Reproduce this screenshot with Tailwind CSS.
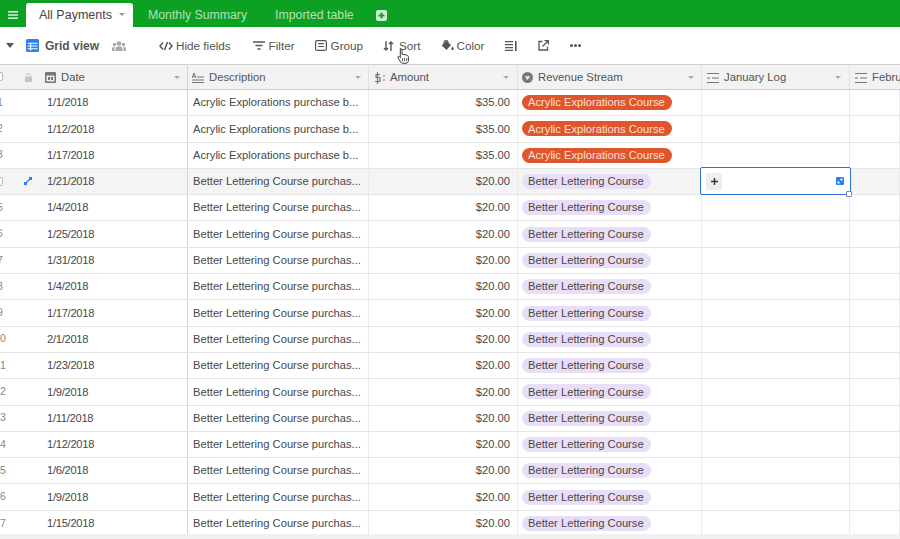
<!DOCTYPE html>
<html lang="en">
<head>
<meta charset="UTF-8">
<title>All Payments</title>
<script src="https://cdn.jsdelivr.net/npm/@tailwindcss/browser@4"></script>
</head>
<body class="bg-white overflow-hidden h-[539px] w-[900px] relative font-['Liberation_Sans',sans-serif] text-[#404040]">

<!-- top bar -->
<div class="h-[27px] bg-[#0ca122] flex items-end text-[12.3px]">
  <div class="w-[26px] h-[27px] flex items-center justify-center pt-[3px]">
    <svg width="10" height="8" viewBox="0 0 10 8" fill="#fff" class="opacity-80"><rect width="10" height="1.6"/><rect y="3.2" width="10" height="1.6"/><rect y="6.4" width="10" height="1.6"/></svg>
  </div>
  <div class="w-[107px] h-[24px] bg-white rounded-t-[3px] flex items-center pl-[13px] text-[#444] text-[12.5px] relative">All Payments
    <span class="absolute left-[93px] top-[10px] border-x-[3px] border-x-transparent border-t-[3px] border-t-[#999]"></span>
  </div>
  <div class="h-[27px] flex items-center pt-[3px] pl-[15px] text-white/70">Monthly Summary</div>
  <div class="h-[27px] flex items-center pt-[3px] pl-[28px] text-white/70">Imported table</div>
  <div class="h-[27px] flex items-center pt-[3px] pl-[22px]">
    <svg width="11" height="11" viewBox="0 0 11 11"><rect width="11" height="11" rx="2" fill="#d3efd7"/><path d="M5.5 2.5v6M2.5 5.5h6" stroke="#0ca122" stroke-width="1.8"/></svg>
  </div>
</div>

<!-- toolbar -->
<div class="h-[37px] flex items-center text-[11.7px] text-[#555] relative">
  <span class="ml-[6px] border-x-[4px] border-x-transparent border-t-[5px] border-t-[#555]"></span>
  <svg class="ml-[12px]" width="13" height="13" viewBox="0 0 13 13"><rect width="13" height="13" rx="1.5" fill="#2d7ff0"/><path d="M1.5 4.2h10M1.5 7h10M1.5 9.8h10M4.6 4v7.5" stroke="#fff" stroke-width="1.1" fill="none"/></svg>
  <span class="ml-[6px] font-bold text-[12px] text-[#555]">Grid view</span>
  <svg class="ml-[13px]" width="14" height="10" viewBox="0 0 14 10" fill="#a8a8a8"><circle cx="7" cy="2.5" r="2.3"/><circle cx="2.5" cy="3.5" r="1.7"/><circle cx="11.5" cy="3.5" r="1.7"/><path d="M3.5 10V7.5C3.5 6 5 5.3 7 5.3S10.500 6 10.500 7.500V10zM0 10V7.500C0 6.300 1 5.800 2.500 5.800V10zM14 10V7.500C14 6.300 13 5.800 11.500 5.800V10z"/></svg>
  <svg class="ml-[33px]" width="14" height="10" viewBox="0 0 14 10" fill="none" stroke="#555" stroke-width="1.500"><path d="M4 1.500 1 5l3 3.500M10 1.500 13 5l-3 3.500M8.500 1 5.500 9"/></svg>
  <span class="ml-[3px]">Hide fields</span>
  <svg class="ml-[22px]" width="12" height="9" viewBox="0 0 12 9" stroke="#555" stroke-width="1.500"><path d="M0 1h12M2.500 4.500h7M4.500 8h3"/></svg>
  <span class="ml-[4px]">Filter</span>
  <svg class="ml-[20px]" width="12" height="11" viewBox="0 0 12 11" fill="none" stroke="#555" stroke-width="1.200"><rect x=".6" y=".6" width="10.800" height="9.800" rx="1.500"/><path d="M3 3.700h6M3 6.500h6"/></svg>
  <span class="ml-[4px]">Group</span>
  <svg class="ml-[20px]" width="11" height="10" viewBox="0 0 11 10" fill="none" stroke="#555" stroke-width="1.400"><path d="M3 0v9M1 7l2 2 2-2M8 10V1M6 3l2-2 2 2"/></svg>
  <span class="ml-[5px]">Sort</span>
  <svg class="ml-[20px]" width="13" height="11" viewBox="0 0 13 11" fill="#555"><path d="M5 .500 10 5 5.500 10 .800 5.500z"/><path d="M3 3.500V2a2 2 0 0 1 4 0v1.500" fill="none" stroke="#555"/><path d="M11.500 6.500c.8 1.200 1.200 1.800 1.200 2.400a1.200 1.200 0 0 1-2.400 0c0-.6.400-1.200 1.200-2.400z"/></svg>
  <span class="ml-[3px]">Color</span>
  <svg class="ml-[21px]" width="12" height="10" viewBox="0 0 12 10" fill="none" stroke="#555" stroke-width="1.200"><path d="M0 .600h8M0 3.600h8M0 6.600h8M0 9.400h8"/><path d="M10.800 0v10" stroke-width="1.600"/></svg>
  <svg class="ml-[21px]" width="11" height="11" viewBox="0 0 11 11" fill="none" stroke="#555" stroke-width="1.300"><path d="M4.500 1.500H1v8.500h8.500V6.500"/><path d="M4.500 6.500 10 1M6.500.700h3.800v3.800"/></svg>
  <span class="ml-[21px] flex gap-[1.500px]"><i class="w-[2.500px] h-[2.500px] rounded-full bg-[#555]"></i><i class="w-[2.500px] h-[2.500px] rounded-full bg-[#555]"></i><i class="w-[2.500px] h-[2.500px] rounded-full bg-[#555]"></i></span>
</div>

<!-- header row -->
<div class="h-[26px] pt-[1px] bg-[#f2f2f2] border-y border-[#d0d0d0] grid grid-cols-[188px_181px_149px_184px_148px_50px] text-[11.3px] text-[#555]">
  <div class="border-r border-[#d4d4d4] flex items-center relative">
    <span class="absolute -left-[6px] top-[6px] w-[9px] h-[9px] border border-[#bbb] rounded-[2px] bg-white"></span>
    <svg class="absolute left-[25px] top-[7px]" width="7" height="9" viewBox="0 0 7 9" fill="#c4c4c4"><rect y="3.500" width="7" height="5.500" rx="1"/><path d="M1.500 4V2.500a2 2 0 0 1 4 0V4" fill="none" stroke="#c4c4c4"/></svg>
    <svg class="absolute left-[45px] top-[6px]" width="11" height="11" viewBox="0 0 11 11"><rect width="11" height="11" rx="1" fill="#777"/><rect x="1.500" y="3.500" width="8" height="6" fill="#eee"/><rect x="3" y="5" width="2" height="3" fill="#777"/><rect x="6" y="5" width="2" height="3" fill="#777"/></svg>
    <span class="ml-[61px]">Date</span>
    <span class="absolute left-[174px] top-[10px] border-x-[3px] border-x-transparent border-t-[3px] border-t-[#aaa]"></span>
  </div>
  <div class="border-r border-[#e2e2e2] flex items-center relative">
    <svg class="ml-[4px]" width="12" height="10" viewBox="0 0 12 10" fill="none" stroke="#777" stroke-width="1"><path d="M0 5 2 0l2 5M1 3.500h2M5 4h7M0 7h12M0 9.500h12"/></svg>
    <span class="ml-[5px]">Description</span>
    <span class="absolute left-[167px] top-[10px] border-x-[3px] border-x-transparent border-t-[3px] border-t-[#aaa]"></span>
  </div>
  <div class="border-r border-[#e2e2e2] flex items-center relative">
    <svg class="ml-[5px]" width="12" height="12" viewBox="0 0 12 12" fill="none" stroke="#777" stroke-width="1.200"><path d="M6 2.500H2v3h4v4H1M3.500 0v12"/><path d="M9 4h2M9 8h2"/></svg>
    <span class="ml-[4px]">Amount</span>
    <span class="absolute left-[134px] top-[10px] border-x-[3px] border-x-transparent border-t-[3px] border-t-[#aaa]"></span>
  </div>
  <div class="border-r border-[#e2e2e2] flex items-center relative">
    <svg class="ml-[4px]" width="11" height="11" viewBox="0 0 11 11"><circle cx="5.500" cy="5.500" r="5.500" fill="#777"/><path d="M2.800 4.200h5.400L5.500 8z" fill="#eee"/></svg>
    <span class="ml-[5px]">Revenue Stream</span>
    <span class="absolute left-[170px] top-[10px] border-x-[3px] border-x-transparent border-t-[3px] border-t-[#aaa]"></span>
  </div>
  <div class="border-r border-[#e2e2e2] flex items-center relative">
    <svg class="ml-[5px]" width="12" height="10" viewBox="0 0 12 10" stroke="#777"><path d="M0 .500h12M0 5h3M5 5h7M0 9.500h12"/></svg>
    <span class="ml-[5px]">January Log</span>
    <span class="absolute left-[133px] top-[10px] border-x-[3px] border-x-transparent border-t-[3px] border-t-[#aaa]"></span>
  </div>
  <div class="flex items-center whitespace-nowrap">
    <svg class="ml-[5px] shrink-0" width="12" height="10" viewBox="0 0 12 10" stroke="#777"><path d="M0 .500h12M0 5h3M5 5h7M0 9.500h12"/></svg>
    <span class="ml-[5px]">Febru</span>
  </div>
</div>

<!-- rows -->
<div class="text-[11.2px] text-[#484848] [&>div]:h-[26.3px] [&>div]:border-b [&>div]:border-[#e4e4e4] [&>div]:grid [&>div]:grid-cols-[188px_181px_149px_184px_148px_50px] [&>div]:items-center [&_b]:font-normal [&_b]:h-full [&_b]:flex [&_b]:items-center [&_b]:border-r [&_b]:border-[#ececec] [&_b:first-child]:border-[#d4d4d4] [&_b:first-child]:pl-[47px] [&_b:first-child]:tracking-[-0.3px] [&_b:nth-child(2)]:pl-[5px] [&_b:nth-child(3)]:justify-end [&_b:nth-child(3)]:pr-[7px] [&_b:nth-child(4)]:pl-[4px] [&_em]:not-italic [&_em]:absolute [&_em]:left-0 [&_em]:text-[#888] [&_em]:text-[10.5px] [&_span]:rounded-full [&_span]:pl-[6px] [&_span]:pr-[7px] [&_span]:h-[15px] [&_span]:flex [&_span]:items-center">
  <div><b>1/1/2018<em class="-ml-[3px]">1</em></b><b>Acrylic Explorations purchase b...</b><b>$35.00</b><b><span class="bg-[#e0552c] text-[#fbe0d6]">Acrylic Explorations Course</span></b><b></b><b></b></div>
  <div><b>1/12/2018<em class="-ml-[3px]">2</em></b><b>Acrylic Explorations purchase b...</b><b>$35.00</b><b><span class="bg-[#e0552c] text-[#fbe0d6]">Acrylic Explorations Course</span></b><b></b><b></b></div>
  <div><b>1/17/2018<em class="-ml-[3px]">3</em></b><b>Acrylic Explorations purchase b...</b><b>$35.00</b><b><span class="bg-[#e0552c] text-[#fbe0d6]">Acrylic Explorations Course</span></b><b></b><b></b></div>
  <div class="bg-[#f4f4f4]"><b>1/21/2018</b><b>Better Lettering Course purchas...</b><b>$20.00</b><b><span class="bg-[#e8def7]">Better Lettering Course</span></b><b></b><b></b></div>
  <div><b>1/4/2018<em class="-ml-[3px]">5</em></b><b>Better Lettering Course purchas...</b><b>$20.00</b><b><span class="bg-[#e8def7]">Better Lettering Course</span></b><b></b><b></b></div>
  <div><b>1/25/2018<em class="-ml-[3px]">6</em></b><b>Better Lettering Course purchas...</b><b>$20.00</b><b><span class="bg-[#e8def7]">Better Lettering Course</span></b><b></b><b></b></div>
  <div><b>1/31/2018<em class="-ml-[3px]">7</em></b><b>Better Lettering Course purchas...</b><b>$20.00</b><b><span class="bg-[#e8def7]">Better Lettering Course</span></b><b></b><b></b></div>
  <div><b>1/4/2018<em class="-ml-[3px]">8</em></b><b>Better Lettering Course purchas...</b><b>$20.00</b><b><span class="bg-[#e8def7]">Better Lettering Course</span></b><b></b><b></b></div>
  <div><b>1/17/2018<em class="-ml-[3px]">9</em></b><b>Better Lettering Course purchas...</b><b>$20.00</b><b><span class="bg-[#e8def7]">Better Lettering Course</span></b><b></b><b></b></div>
  <div><b>2/1/2018<em>0</em></b><b>Better Lettering Course purchas...</b><b>$20.00</b><b><span class="bg-[#e8def7]">Better Lettering Course</span></b><b></b><b></b></div>
  <div><b>1/23/2018<em>1</em></b><b>Better Lettering Course purchas...</b><b>$20.00</b><b><span class="bg-[#e8def7]">Better Lettering Course</span></b><b></b><b></b></div>
  <div><b>1/9/2018<em>2</em></b><b>Better Lettering Course purchas...</b><b>$20.00</b><b><span class="bg-[#e8def7]">Better Lettering Course</span></b><b></b><b></b></div>
  <div><b>1/11/2018<em>3</em></b><b>Better Lettering Course purchas...</b><b>$20.00</b><b><span class="bg-[#e8def7]">Better Lettering Course</span></b><b></b><b></b></div>
  <div><b>1/12/2018<em>4</em></b><b>Better Lettering Course purchas...</b><b>$20.00</b><b><span class="bg-[#e8def7]">Better Lettering Course</span></b><b></b><b></b></div>
  <div><b>1/6/2018<em>5</em></b><b>Better Lettering Course purchas...</b><b>$20.00</b><b><span class="bg-[#e8def7]">Better Lettering Course</span></b><b></b><b></b></div>
  <div><b>1/9/2018<em>6</em></b><b>Better Lettering Course purchas...</b><b>$20.00</b><b><span class="bg-[#e8def7]">Better Lettering Course</span></b><b></b><b></b></div>
  <div><b>1/15/2018<em>7</em></b><b>Better Lettering Course purchas...</b><b>$20.00</b><b><span class="bg-[#e8def7]">Better Lettering Course</span></b><b></b><b></b></div>
</div>

<!-- footer strip -->
<div class="absolute left-0 right-0 bottom-0 h-[5px] bg-[#f0f0f0]"></div>

<!-- row 4 checkbox and expand icon -->
<span class="absolute -left-[6px] top-[177px] w-[9px] h-[9px] border border-[#bbb] rounded-[2px] bg-white"></span>
<svg class="absolute left-[24px] top-[177px]" width="8" height="8" viewBox="0 0 8 8" fill="#2d7ff0"><rect x="5" width="3" height="3"/><rect y="5" width="3" height="3"/><path d="M2 6l4-4" stroke="#2d7ff0" stroke-width="1.300"/></svg>

<!-- selected cell -->
<div class="absolute left-[700px] top-[167px] w-[151px] h-[28px] bg-white border-[1.500px] border-[#2d72d9] rounded-[2px] flex items-center justify-between pl-[5px] pr-[6px]">
  <span class="w-[16px] h-[17px] bg-[#eee] rounded-[2px] flex items-center justify-center">
    <svg width="7" height="7" viewBox="0 0 7 7" stroke="#333" stroke-width="1.400"><path d="M3.500 0v7M0 3.500h7"/></svg>
  </span>
  <svg width="8" height="8" viewBox="0 0 8 8"><rect width="8" height="8" rx="1" fill="#2d7ff0"/><rect x="4.500" y="1.500" width="2" height="2" fill="#fff"/><rect x="1.500" y="4.500" width="2" height="2" fill="#fff"/></svg>
</div>
<span class="absolute left-[846px] top-[191px] w-[6px] h-[6px] bg-white border border-[#7d7fd0] rounded-[1px]"></span>

<!-- cursor -->
<svg class="absolute left-[397px] top-[48px]" width="13" height="16" viewBox="0 0 12 15"><path d="M3 1.500c.8-.8 1.600 0 1.600.8v3.500l4 .7c1.300.3 2 1 2 2.200V12c0 1.300-1 2.300-2.300 2.300H5.300c-1 0-1.600-.5-2-1.200L.8 9c-.4-.8.500-1.600 1.300-1L3 9z" fill="#fff" stroke="#333" stroke-width=".9"/><path d="M5 9.500v3M7 9.500v3M9 9.500v3" stroke="#333" stroke-width=".7"/></svg>

</body>
</html>
